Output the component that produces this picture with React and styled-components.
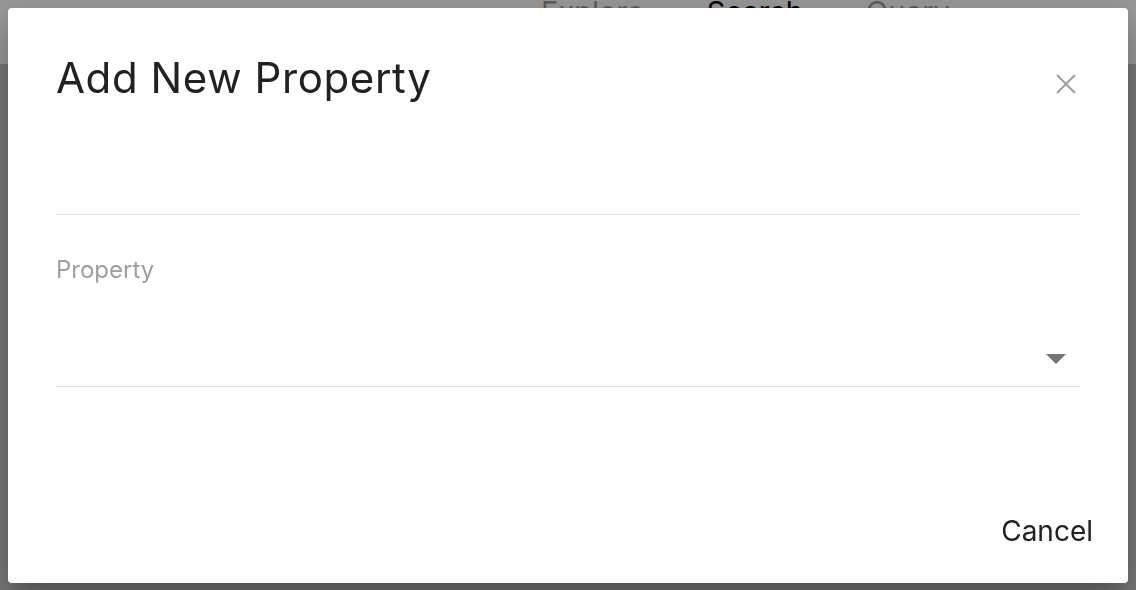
import React from "react";
import styled, { createGlobalStyle } from "styled-components";

const GlobalStyle = createGlobalStyle`
  html, body {
    margin: 0;
    padding: 0;
    height: 100%;
    overflow: hidden;
  }
  body {
    font-family: Inter, "Liberation Sans", sans-serif;
    background: #cbcbcb;
  }
`;

function App() {
  return (
    <>
      <GlobalStyle />
      <Page>
        <TopBar>
          <Tab>Explore</Tab>
          <Tab active>Search</Tab>
          <Tab>Query</Tab>
        </TopBar>
      </Page>

      <Backdrop>
        <Dialog>
          <TitleRow>
            <Title>Add New Property</Title>
            <CloseButton aria-label="close">
              <svg width="20" height="20" viewBox="0 0 20 20">
                <path
                  d="M1 1 L19 19 M19 1 L1 19"
                  stroke="#9e9e9e"
                  strokeWidth="2"
                  fill="none"
                />
              </svg>
            </CloseButton>
          </TitleRow>

          <TextField>
            <Input />
          </TextField>

          <Label>Property</Label>
          <SelectField>
            <Arrow>
              <svg width="20" height="10" viewBox="0 0 20 10">
                <path d="M0 0 L20 0 L10 10 Z" fill="#757575" />
              </svg>
            </Arrow>
          </SelectField>

          <Actions>
            <TextButton>Cancel</TextButton>
          </Actions>
        </Dialog>
      </Backdrop>
    </>
  );
}

export default App;

const Page = styled.div`
  height: 100vh;
  background: #cbcbcb;
`;

const TopBar = styled.div`
  height: 64px;
  background: #ffffff;
  display: flex;
  align-items: flex-start;
  gap: 63px;
  padding-left: 541px;
  box-sizing: border-box;
`;

const Tab = styled.div`
  font-size: 29px;
  line-height: 30px;
  margin-top: -3px;
  color: ${(props) => (props.active ? "#000000" : "#9e9e9e")};
`;

const Backdrop = styled.div`
  position: fixed;
  inset: 0;
  background: rgba(0, 0, 0, 0.4);
`;

const Dialog = styled.div`
  position: absolute;
  top: 8px;
  left: 8px;
  width: 1120px;
  height: 575px;
  background: #ffffff;
  border-radius: 4px;
  box-shadow: 0px 11px 15px -7px rgba(0, 0, 0, 0.2),
    0px 24px 38px 3px rgba(0, 0, 0, 0.14), 0px 9px 46px 8px rgba(0, 0, 0, 0.12);
  box-sizing: border-box;
  padding: 46px 48px 0 48px;
  display: flex;
  flex-direction: column;
`;

const TitleRow = styled.div`
  display: flex;
  justify-content: space-between;
  align-items: center;
  height: 48px;
`;

const Title = styled.h2`
  margin: 0;
  font-size: 42px;
  line-height: 48px;
  font-weight: 400;
  color: #212121;
  letter-spacing: 0.6px;
`;

const CloseButton = styled.button`
  border: none;
  background: none;
  padding: 0;
  margin-right: 4px;
  margin-top: 12px;
  width: 20px;
  height: 20px;
  display: flex;
  cursor: pointer;
`;

const TextField = styled.div`
  height: 112px;
  border-bottom: 1px solid #e0e0e0;
  display: flex;
  align-items: flex-end;
`;

const Input = styled.input`
  border: none;
  outline: none;
  width: 100%;
  font-size: 24px;
  padding: 8px 0;
  font-family: inherit;
  background: transparent;
`;

const Label = styled.div`
  margin-top: 41px;
  font-size: 24px;
  line-height: 28px;
  color: #9e9e9e;
`;

const SelectField = styled.div`
  height: 102px;
  border-bottom: 1px solid #e0e0e0;
  display: flex;
  justify-content: flex-end;
  align-items: flex-end;
`;

const Arrow = styled.div`
  display: flex;
  margin-right: 14px;
  margin-bottom: 22px;
`;

const Actions = styled.div`
  margin-top: auto;
  margin-right: -21px;
  padding-bottom: 29px;
  display: flex;
  justify-content: flex-end;
`;

const TextButton = styled.button`
  border: none;
  background: none;
  font-family: inherit;
  font-size: 28px;
  line-height: 34px;
  padding: 6px 8px;
  color: #212121;
  cursor: pointer;
`;
